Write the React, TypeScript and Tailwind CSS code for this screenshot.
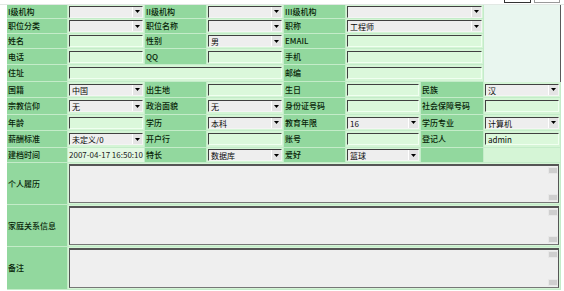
import React from "react";

const LBL =
  "bg-[#92d89e] border-r border-b border-[#c4ecc9] flex items-center pl-px text-[8px] leading-none font-medium text-[#082408] whitespace-nowrap overflow-hidden";
const FLD =
  "bg-[#d5f5d6] border-r border-b border-[#c4ecc9] flex items-center pl-[1px] pr-[1px] overflow-hidden";

function Arrow() {
  return (
    <span className="w-[10px] shrink-0 bg-[#e4e4e4] border-l border-[#ffffff] flex items-center justify-center">
      <svg width="5" height="3" viewBox="0 0 5 3">
        <path d="M0 0H5L2.5 3Z" fill="#000" />
      </svg>
    </span>
  );
}

function Sel({ v = "" }: { v?: string }) {
  return (
    <div className="h-[12px] w-full flex bg-[#eeeeee] border-t border-l border-t-[#404040] border-l-[#404040] border-b border-r border-b-[#f4f4f4] border-r-[#f4f4f4]">
      <span className="flex-1 pl-[2px] text-[8px] leading-[11px] text-[#0a0a0a] whitespace-nowrap overflow-hidden">
        {v}
      </span>
      <Arrow />
    </div>
  );
}

function Inp({ v = "" }: { v?: string }) {
  return (
    <div className="h-[12px] w-full bg-[#dbf8db] border-t border-l border-t-[#404040] border-l-[#404040] border-b border-r border-b-[#f0fff0] border-r-[#f0fff0] pl-[2px] text-[8px] leading-[11px] text-[#0a0a0a] whitespace-nowrap overflow-hidden">
      {v}
    </div>
  );
}

function TA() {
  return (
    <div className="h-full w-full flex bg-[#efefef] border-t-2 border-l border-t-[#555] border-l-[#555] border-b border-b-[#777] border-r border-r-[#555]">
      <div className="flex-1" />
      <div className="w-[10px] flex flex-col justify-between py-px">
        <div className="h-[7px] bg-[#cfcfcf] border border-[#e8e8e8]" />
        <div className="h-[7px] bg-[#cfcfcf] border border-[#e8e8e8]" />
      </div>
    </div>
  );
}

export default function App() {
  return (
    <div className="w-[564px] h-[291px] bg-white overflow-hidden font-['Noto_Sans_CJK_SC','Noto_Sans',sans-serif]">
      <div className="h-[5px] flex justify-end items-start gap-[3px] pr-[4px] border-b border-[#e2e8e4]">
        <div className="w-[27px] h-[3px] border-x border-b border-[#333] bg-white" />
        <div className="w-[26px] h-[3px] border-x border-b border-[#9a9a9a] bg-white" />
      </div>
      <div className="ml-[7px] grid grid-cols-[61px_77px_62px_77px_62px_75px_63px_77px] grid-rows-[14px_15px_15px_16px_17px_16px_17px_16px_17px_15px_42px_42px_43px]">
        {/* row 1 */}
        <div className={LBL}>I级机构</div>
        <div className={FLD}><Sel /></div>
        <div className={LBL}>II级机构</div>
        <div className={FLD}><Sel /></div>
        <div className={LBL}>III级机构</div>
        <div className={`${FLD} col-span-2`}><Sel /></div>
        <div className="row-span-5 bg-[#e9f6ef] border-r border-[#5a5a5a]" />
        {/* row 2 */}
        <div className={LBL}>职位分类</div>
        <div className={FLD}><Sel /></div>
        <div className={LBL}>职位名称</div>
        <div className={FLD}><Sel /></div>
        <div className={LBL}>职称</div>
        <div className={`${FLD} col-span-2`}><Sel v="工程师" /></div>
        {/* row 3 */}
        <div className={LBL}>姓名</div>
        <div className={FLD}><Inp /></div>
        <div className={LBL}>性别</div>
        <div className={FLD}><Sel v="男" /></div>
        <div className={LBL}>EMAIL</div>
        <div className={`${FLD} col-span-2`}><Inp /></div>
        {/* row 4 */}
        <div className={LBL}>电话</div>
        <div className={FLD}><Inp /></div>
        <div className={LBL}>QQ</div>
        <div className={FLD}><Inp /></div>
        <div className={LBL}>手机</div>
        <div className={`${FLD} col-span-2`}><Inp /></div>
        {/* row 5 */}
        <div className={LBL}>住址</div>
        <div className={`${FLD} col-span-3`}><Inp /></div>
        <div className={LBL}>邮编</div>
        <div className={`${FLD} col-span-2`}><Inp /></div>
        {/* row 6 */}
        <div className={LBL}>国籍</div>
        <div className={FLD}><Sel v="中国" /></div>
        <div className={LBL}>出生地</div>
        <div className={FLD}><Inp /></div>
        <div className={LBL}>生日</div>
        <div className={FLD}><Inp /></div>
        <div className={LBL}>民族</div>
        <div className={FLD}><Sel v="汉" /></div>
        {/* row 7 */}
        <div className={LBL}>宗教信仰</div>
        <div className={FLD}><Sel v="无" /></div>
        <div className={LBL}>政治面貌</div>
        <div className={FLD}><Sel v="无" /></div>
        <div className={LBL}>身份证号码</div>
        <div className={FLD}><Inp /></div>
        <div className={LBL}>社会保障号码</div>
        <div className={FLD}><Inp /></div>
        {/* row 8 */}
        <div className={LBL}>年龄</div>
        <div className={FLD}><Inp /></div>
        <div className={LBL}>学历</div>
        <div className={FLD}><Sel v="本科" /></div>
        <div className={LBL}>教育年限</div>
        <div className={FLD}><Sel v="16" /></div>
        <div className={LBL}>学历专业</div>
        <div className={FLD}><Sel v="计算机" /></div>
        {/* row 9 */}
        <div className={LBL}>薪酬标准</div>
        <div className={FLD}><Sel v="未定义/0" /></div>
        <div className={LBL}>开户行</div>
        <div className={FLD}><Inp /></div>
        <div className={LBL}>账号</div>
        <div className={FLD}><Inp /></div>
        <div className={LBL}>登记人</div>
        <div className={FLD}><Inp v="admin" /></div>
        {/* row 10 */}
        <div className={LBL}>建档时间</div>
        <div className={`${FLD} bg-[#e3f8e3] text-[8px] leading-none text-[#1a1a1a] whitespace-nowrap`}>
          2007-04-17 16:50:10
        </div>
        <div className={LBL}>特长</div>
        <div className={FLD}><Sel v="数据库" /></div>
        <div className={LBL}>爱好</div>
        <div className={FLD}><Sel v="篮球" /></div>
        <div className={LBL}></div>
        <div className={FLD}></div>
        {/* textareas */}
        <div className={LBL}>个人履历</div>
        <div className={`${FLD} col-span-7 items-stretch py-px`}><TA /></div>
        <div className={LBL}>家庭关系信息</div>
        <div className={`${FLD} col-span-7 items-stretch py-px`}><TA /></div>
        <div className={LBL}>备注</div>
        <div className={`${FLD} col-span-7 items-stretch py-px`}><TA /></div>
      </div>
    </div>
  );
}
